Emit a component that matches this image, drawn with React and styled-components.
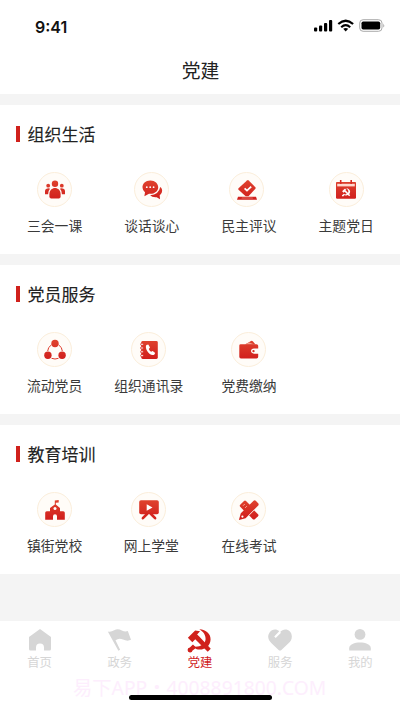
import styled, { createGlobalStyle } from 'styled-components';

const GlobalStyle = createGlobalStyle`
  * {
    box-sizing: border-box;
  }
  body {
    margin: 0;
    background: #fff;
    font-family: 'Noto Sans CJK SC', sans-serif;
    color: #3a3a3a;
  }
`;

const Screen = styled.div`
  position: relative;
  display: flex;
  flex-direction: column;
  width: 400px;
  height: 710px;
  overflow: hidden;
  background: #f4f4f4;
`;

const Header = styled.header`
  height: 94px;
  background: #fff;
`;

const StatusBar = styled.div`
  display: flex;
  align-items: center;
  justify-content: space-between;
  height: 50px;
  padding: 3px 15px 0 35px;
`;

const Time = styled.span`
  font: 600 16px/20px Inter, sans-serif;
  color: #111;
`;

const PageTitle = styled.h1`
  margin: 6px 0 0;
  padding-left: 1px;
  font-size: 18.8px;
  font-weight: 400;
  line-height: 28px;
  text-align: center;
  color: #222;
`;

const Sections = styled.main`
  display: flex;
  flex: 1;
  flex-direction: column;
  gap: 11px;
  padding-top: 11px;
`;

const Section = styled.section`
  height: 149px;
  padding-top: 16px;
  background: #fff;
`;

const SectionTitle = styled.h2`
  display: flex;
  align-items: center;
  gap: 8px;
  height: 25px;
  margin: 0;
  padding-left: 16px;
  font-size: 17px;
  font-weight: 400;
  line-height: 25px;
  color: #222;
  -webkit-text-stroke: 0.12px;

  &::before {
    content: '';
    width: 3.5px;
    height: 16px;
    background: #d0211c;
  }
`;

const Grid = styled.div`
  display: grid;
  grid-template-columns: repeat(4, 97.2px);
  padding: 26px 0 0 6px;
`;

const Item = styled.div`
  display: flex;
  flex-direction: column;
  align-items: center;
`;

const IconCircle = styled.div`
  display: grid;
  place-items: center;
  width: 35px;
  height: 35px;
  margin-left: ${(props) => (props.$shift || 0) * 2}px;
  border: 1px solid #fbeedb;
  border-radius: 50%;
  background: #fffcf8;

  svg {
    width: 22px;
    height: 22px;
  }
`;

const Label = styled.span`
  margin-top: 7px;
  margin-left: ${(props) => (props.$shift || 0) * 2}px;
  font-size: 13.8px;
  line-height: 22px;
  white-space: nowrap;
`;

const TabBar = styled.nav`
  display: grid;
  grid-template-columns: repeat(5, 80.2px);
  align-content: start;
  height: 89px;
  padding-top: 7px;
  margin-left: -0.5px;
  background: #fff;
`;

const Tab = styled.div`
  display: flex;
  flex-direction: column;
  align-items: center;
  font-size: 12.3px;
  line-height: 18px;
  color: ${(props) => (props.$active ? '#d0211c' : '#d6d6d6')};

  svg {
    width: 26px;
    height: 25px;
    margin-left: ${(props) => (props.$active ? '-2px' : 0)};
  }
`;

const HomeIndicator = styled.div`
  position: absolute;
  left: 129px;
  bottom: 10px;
  width: 143px;
  height: 5px;
  border-radius: 3px;
  background: #000;
`;

const Watermark = styled.div`
  position: absolute;
  left: 73px;
  bottom: 8px;
  font-family: 'Noto Sans', 'Noto Sans CJK SC', sans-serif;
  font-size: 19.3px;
  line-height: 28px;
  white-space: nowrap;
  color: #fdeefd;
`;

const SignalIcon = () => (
  <svg width="72" height="16" viewBox="0 0 72 16">
    <rect x="1" y="8.5" width="3.2" height="4" rx="1" />
    <rect x="6" y="6.5" width="3.2" height="6" rx="1" />
    <rect x="11" y="4" width="3.2" height="8.5" rx="1" />
    <rect x="16" y="1" width="3.2" height="11.5" rx="1" />
    <g fill="none" stroke="#000" strokeWidth="2.2">
      <path d="M25.3 5Q32.7-1.5 40.1 5" />
      <path d="M28.2 8.2Q32.7 4.2 37.2 8.2" />
    </g>
    <path d="M30.2 9.8Q32.7 8 35.2 9.8L32.7 12.4Z" />
    <rect x="46.7" y="0.7" width="22.3" height="11.6" rx="3.4" fill="none" stroke="#aaa" />
    <rect x="48.5" y="2.5" width="18.7" height="8" rx="1.7" />
    <path d="M70.4 4.5Q72 6.5 70.4 8.5Z" fill="#999" />
  </svg>
);

// hammer and sickle, takes the colour of its parent
const Emblem = () => (
  <>
    <path d="M12.3 1.1C19 1.4 23.3 5.6 23.1 11C22.8 18.2 15.8 22.2 9.2 20.1L6.8 17.8C12.6 18.7 17.9 15.5 18.3 11C18.7 6.8 16 3.2 12.3 1.1Z" />
    <path d="M1.3 9.3L8.3 2.3L13 3L10.2 6.2L12 7.9L23.3 19.8L20.4 22.7L8.4 10.9L5.6 13.7Z" />
    <path d="M6.2 15.9L9.4 19L5.8 21.5A2.4 2.4 0 1 1 3.2 18.7Z" />
  </>
);

const icons = {
  people: (
    <>
      <circle cx="11" cy="4.7" r="3.2" />
      <circle cx="4.2" cy="6.7" r="1.9" />
      <circle cx="17.8" cy="6.7" r="1.9" />
      <path d="M5.4 18.2V15.3C5.4 7 16.6 7 16.6 15.3V18.2L15.2 19.6H6.8Z" />
      <path d="M1 15.2V12Q1.2 9.3 4.9 9.3Q5.8 9.3 6 9.7Q4.1 11.7 4.1 15.2ZM21 15.2V12Q20.8 9.3 17.1 9.3Q16.2 9.3 16 9.7Q17.9 11.7 17.9 15.2Z" />
    </>
  ),
  chat: (
    <>
      <path d="M19.2 8Q22 10 20.8 13.5Q20.1 15.3 18.7 16.2L19 20.2L15.7 18.2Q11.2 18.6 9.1 16.2Q17.9 15.7 19.2 8Z" />
      <path d="M9.4 1.4C14 1.4 17.2 4.5 17.2 8.2C17.2 12.3 13.4 14.8 9.4 14.8L8 14.7L3.4 17.2L4 13.2C-1 9 1.8 1.4 9.4 1.4Z" />
      <g fill="#fff">
        <circle cx="5.8" cy="8.2" r=".9" />
        <circle cx="9.2" cy="8.2" r=".9" />
        <circle cx="12.6" cy="8.2" r=".9" />
      </g>
    </>
  ),
  vote: (
    <>
      <path d="M12.7 1.4L19.4 8.2Q20 9 19.4 9.7L12.5 17.2H9.7L2.5 10.7Q1.9 10 2.5 9.2L11 1.4Q12 .7 12.7 1.4Z" />
      <path d="M8.6 9.3L11 11.6L15.2 7.7" fill="none" stroke="#fff" strokeWidth="1.8" />
      <path d="M2 17.8H20L21 20.8H1Z" />
      <path d="M6 18.7H16.5L17 19.3H5.4Z" fill="#f8b9a8" />
    </>
  ),
  calendar: (
    <>
      <path d="M1 3.8Q1 3 1.8 3H20.2Q21 3 21 3.8V18.5Q21 19.7 19.8 19.7H2.2Q1 19.7 1 18.5Z" />
      <path d="M2.2 4.8H19.8V7.4H2.2Z" fill="#ffd9ce" />
      <path d="M5.7 1V5.1M16.2 1V5.1" stroke="#d82b22" strokeWidth="1.6" />
      <g fill="#fff" transform="translate(6.6 8.8) scale(.37)">
        <Emblem />
      </g>
    </>
  ),
  flow: (
    <>
      <path d="M7.5 5.8Q3.8 8.2 3.7 12M14.5 5.8Q18.2 8.2 18.3 12M7.5 19.3Q11 20.7 14.5 19.3" fill="none" stroke="#df3b2d" strokeWidth="1" />
      <circle cx="11" cy="4.5" r="3.7" />
      <circle cx="3.9" cy="16.2" r="3.7" />
      <circle cx="18.1" cy="16.2" r="3.7" />
    </>
  ),
  contacts: (
    <>
      <rect x="3.3" y="2" width="16.5" height="18" rx="1.4" />
      <g fill="#fff" stroke="#d82b22" strokeWidth=".9">
        <circle cx="4" cy="5.3" r="1.3" />
        <circle cx="4" cy="9" r="1.3" />
        <circle cx="4" cy="12.8" r="1.3" />
        <circle cx="4" cy="16.6" r="1.3" />
      </g>
      <path d="M8.3 6.1L10.3 5.4L12 8.6L10.8 9.9Q11.6 11.8 13.1 12.7L14.7 12L17.2 14L16.2 15.7C12.3 18 6.2 10.2 8.3 6.1Z" fill="#fff" />
    </>
  ),
  wallet: (
    <>
      <path d="M7 5.5L13 1.9Q14 1.4 14.8 2.2L17.5 5.5Z" />
      <path d="M7 5.3L11.2 3.6L16 5.3Z" fill="#f0a18e" />
      <path d="M2.7 5.2H18.5Q20.2 5.2 20.2 6.8V9.6H16Q13 10 13 12.1Q13.1 14.5 16 14.7H20.2V17.8Q20.2 19.5 18.5 19.5H3Q1.3 19.5 1.3 17.8V6.6Q1.3 5.2 2.7 5.2Z" />
      <circle cx="15.5" cy="12.1" r="1.2" />
    </>
  ),
  school: (
    <>
      <path d="M10.8 1.5L14.7 1V3.5L11.8 3.8V5.4L16 9V12.2H19.2Q20.8 12.2 20.8 13.8V20.8H13V17.2A2 2 0 0 0 9 17.2V20.8H1.2V13.8Q1.2 12.2 2.8 12.2H6V9L10.8 5.4Z" />
      <circle cx="11" cy="9.6" r="1.5" fill="#fff" />
    </>
  ),
  board: (
    <>
      <rect x="1.2" y="1.3" width="19.6" height="14" rx="1.8" />
      <path d="M9 15L4.9 19.2M13 15L17.1 19.2" stroke="#d42620" strokeWidth="2.6" strokeLinecap="round" />
      <path d="M8.7 5.2V11.8L14.5 8.5Z" fill="#fff" />
    </>
  ),
  exam: (
    <>
      <path d="M2.2 5.8L6 2Q7 1 8 2L12 6L6.3 12L2.2 7.8Q1.2 6.8 2.2 5.8Z" />
      <path d="M5.2 6.6L6.6 5.2M7.3 8.7L8.7 7.3" stroke="#ffc9b8" strokeWidth="1" />
      <path d="M16 11.2L20 15.2Q21 16.2 20 17.2L16.8 20.2Q15.8 21 14.8 20.2L11 16.3Z" />
      <path d="M15.6 1.8Q16.8.8 18 2L20.2 4.3Q21.2 5.5 20 6.7L7.6 19.2L.9 21.1L2.8 14.3Z" />
      <path d="M11 16.3L16.2 11" stroke="#fffcf8" strokeWidth=".6" />
      <circle cx="4.4" cy="17.6" r="1.1" fill="#fff" />
    </>
  ),
  home: <path d="M13 1L24 9V21Q24 22.5 22.5 22.5H17V19.5A4 4 0 0 0 9 19.5V22.5H3.5Q2 22.5 2 21V9Z" />,
  flag: <path d="M.8 3.4Q4 4.2 7.2 2.2Q11 .1 14.8 2.5Q18 4.2 20.8 3.1L24 11.8Q20.5 13.6 16 11.5Q11.8 9.6 8.5 12.3L13.1 21.8L11.4 22.7Z" />,
  heart: <path d="M13 4.2C17-.7 24.5 1.5 24.8 8.2C25 11.2 23.5 13.4 21.5 15.3L14.4 22Q13 23.2 11.6 22L4.5 15.3C1 12 .2 8 2.4 4.7C5 .8 9.7.6 12.2 3.3L7.2 8.5L8.7 10L14.3 4.4Z" />,
  user: (
    <>
      <circle cx="13" cy="6.4" r="5.4" />
      <path d="M2.2 22.5V20.2C2.2 12.6 23.8 12.6 23.8 20.2V22.5Z" />
    </>
  ),
};

const sections = [
  {
    title: '组织生活',
    items: [
      { label: '三会一课', icon: 'people' },
      { label: '谈话谈心', icon: 'chat' },
      { label: '民主评议', icon: 'vote', shift: -2 },
      { label: '主题党日', icon: 'calendar' },
    ],
  },
  {
    title: '党员服务',
    items: [
      { label: '流动党员', icon: 'flow' },
      { label: '组织通讯录', icon: 'contacts', shift: -3, labelShift: -3 },
      { label: '党费缴纳', icon: 'wallet' },
    ],
  },
  {
    title: '教育培训',
    items: [
      { label: '镇街党校', icon: 'school' },
      { label: '网上学堂', icon: 'board', shift: -3, labelShift: -0.5 },
      { label: '在线考试', icon: 'exam' },
    ],
  },
];

const tabs = [
  { label: '首页', icon: 'home' },
  { label: '政务', icon: 'flag' },
  { label: '党建', icon: 'emblem', active: true },
  { label: '服务', icon: 'heart' },
  { label: '我的', icon: 'user' },
];

export default function App() {
  return (
    <Screen>
      <GlobalStyle />
      <svg width="0" height="0" style={{ position: 'absolute' }}>
        <defs>
          <linearGradient id="red" gradientUnits="userSpaceOnUse" x1="0" y1="0" x2="0" y2="22">
            <stop offset="0" stopColor="#e0452f" />
            <stop offset="1" stopColor="#cf1b1b" />
          </linearGradient>
        </defs>
      </svg>
      <Header>
        <StatusBar>
          <Time>9:41</Time>
          <SignalIcon />
        </StatusBar>
        <PageTitle>党建</PageTitle>
      </Header>
      <Sections>
        {sections.map((section) => (
          <Section key={section.title}>
            <SectionTitle>{section.title}</SectionTitle>
            <Grid>
              {section.items.map((item) => (
                <Item key={item.label}>
                  <IconCircle $shift={item.shift}>
                    <svg viewBox="0 0 22 22" fill="url(#red)">
                      {icons[item.icon]}
                    </svg>
                  </IconCircle>
                  <Label $shift={item.labelShift}>{item.label}</Label>
                </Item>
              ))}
            </Grid>
          </Section>
        ))}
      </Sections>
      <TabBar>
        {tabs.map((tab) => (
          <Tab key={tab.label} $active={tab.active}>
            <svg viewBox={tab.active ? '0 0 24 24' : '0 0 26 25'} fill="currentColor">
              {tab.active ? <Emblem /> : icons[tab.icon]}
            </svg>
            {tab.label}
          </Tab>
        ))}
      </TabBar>
      <Watermark>易下APP・4008891800.COM</Watermark>
      <HomeIndicator />
    </Screen>
  );
}
